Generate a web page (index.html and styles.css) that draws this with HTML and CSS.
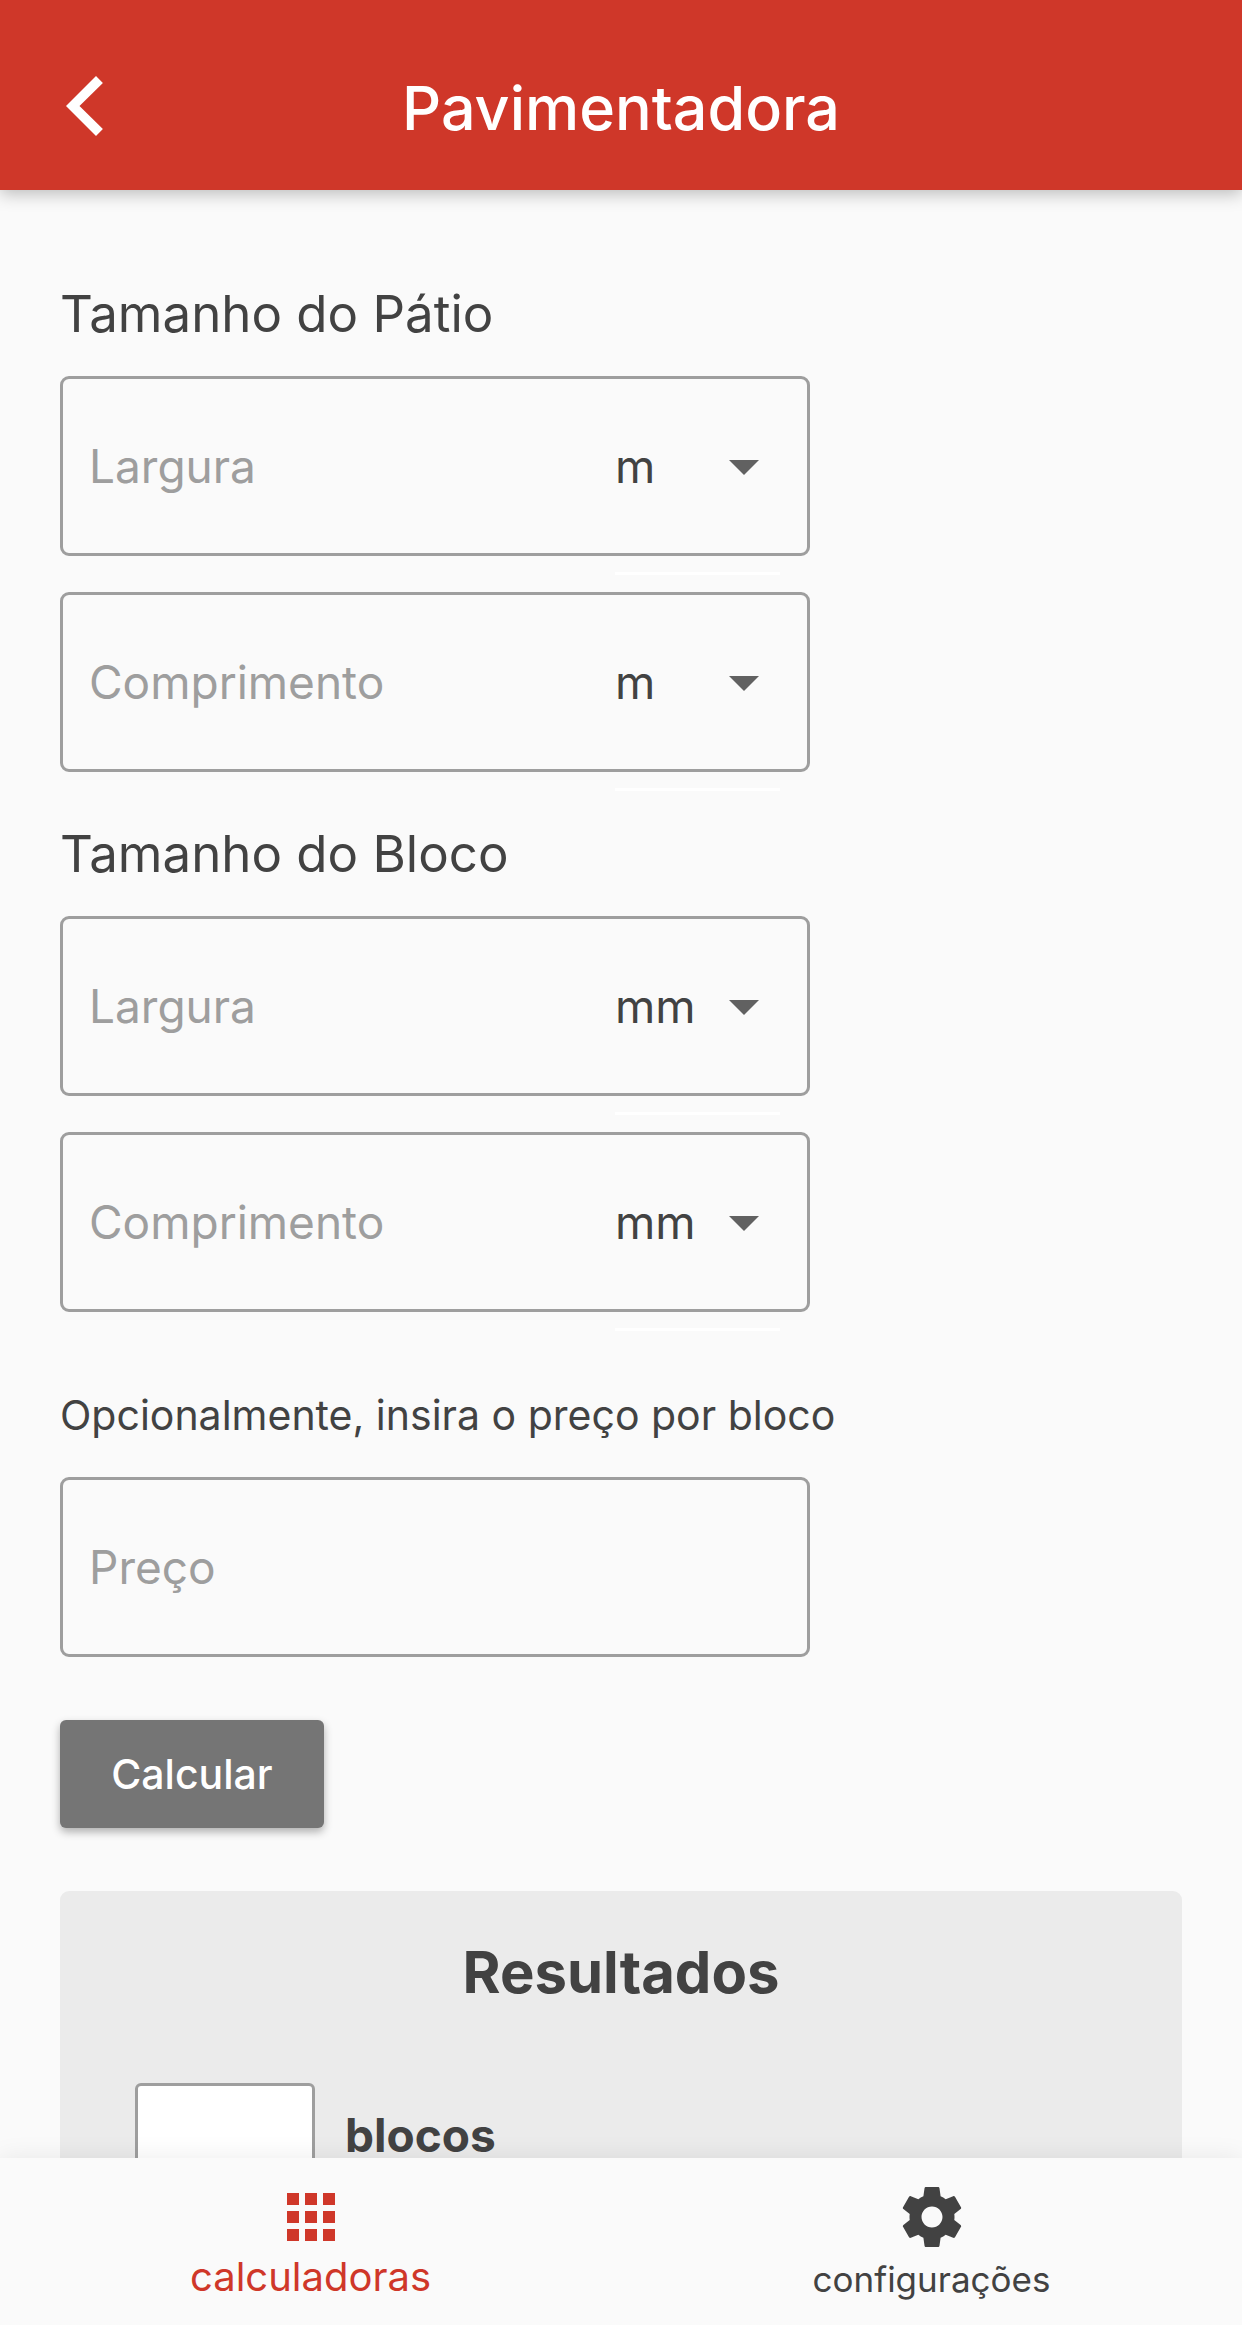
FILE: index.html
```html
<!DOCTYPE html>
<html lang="pt-BR">
<head>
    <meta charset="UTF-8">
    <meta name="viewport" content="width=device-width, initial-scale=1.0">
    <title>Pavimentadora</title>
    <link rel="stylesheet" href="styles.css">
</head>
<body>
    <header class="app-bar">
        <button class="back" type="button" aria-label="Voltar">
            <svg viewBox="0 0 13 24"><path d="M0 12L10 2l2.3 2.3L4.5 12l7.8 7.7L10 22z"/></svg>
        </button>
        <h1>Pavimentadora</h1>
    </header>

    <main>
        <form>
            <h2>Tamanho do Pátio</h2>
            <div class="fields">
                <div class="field">
                    <input type="text" inputmode="decimal" placeholder="Largura" aria-label="Largura do pátio">
                    <div class="unit">
                        <select aria-label="Unidade da largura do pátio">
                            <option>mm</option>
                            <option>cm</option>
                            <option selected>m</option>
                        </select>
                        <svg viewBox="0 0 24 24"><path d="M7 10l5 5 5-5z"/></svg>
                    </div>
                </div>
                <div class="field">
                    <input type="text" inputmode="decimal" placeholder="Comprimento" aria-label="Comprimento do pátio">
                    <div class="unit">
                        <select aria-label="Unidade do comprimento do pátio">
                            <option>mm</option>
                            <option>cm</option>
                            <option selected>m</option>
                        </select>
                        <svg viewBox="0 0 24 24"><path d="M7 10l5 5 5-5z"/></svg>
                    </div>
                </div>
            </div>

            <h2>Tamanho do Bloco</h2>
            <div class="fields">
                <div class="field">
                    <input type="text" inputmode="decimal" placeholder="Largura" aria-label="Largura do bloco">
                    <div class="unit">
                        <select aria-label="Unidade da largura do bloco">
                            <option selected>mm</option>
                            <option>cm</option>
                            <option>m</option>
                        </select>
                        <svg viewBox="0 0 24 24"><path d="M7 10l5 5 5-5z"/></svg>
                    </div>
                </div>
                <div class="field">
                    <input type="text" inputmode="decimal" placeholder="Comprimento" aria-label="Comprimento do bloco">
                    <div class="unit">
                        <select aria-label="Unidade do comprimento do bloco">
                            <option selected>mm</option>
                            <option>cm</option>
                            <option>m</option>
                        </select>
                        <svg viewBox="0 0 24 24"><path d="M7 10l5 5 5-5z"/></svg>
                    </div>
                </div>
            </div>

            <label class="note" for="preco">Opcionalmente, insira o preço por bloco</label>
            <div class="field">
                <input type="text" inputmode="decimal" id="preco" placeholder="Preço">
            </div>

            <button class="calculate" type="button">Calcular</button>
        </form>

        <section class="results">
            <h3>Resultados</h3>
            <div class="result">
                <input type="text" id="blocos" readonly>
                <label for="blocos">blocos</label>
            </div>
        </section>
    </main>

    <nav class="tabs">
        <a href="#calculadoras" class="tab active">
            <svg viewBox="0 0 24 24"><path d="M4 8h4V4H4v4zm6 12h4v-4h-4v4zm-6 0h4v-4H4v4zm0-6h4v-4H4v4zm6 0h4v-4h-4v4zm6-10v4h4V4h-4zm-6 4h4V4h-4v4zm6 6h4v-4h-4v4zm0 6h4v-4h-4v4z"/></svg>
            <span>calculadoras</span>
        </a>
        <a href="#configuracoes" class="tab">
            <svg viewBox="0 0 24 24"><path d="M19.43 12.98c.04-.32.07-.64.07-.98s-.03-.66-.07-.98l2.11-1.65c.19-.15.24-.42.12-.64l-2-3.46c-.12-.22-.39-.3-.61-.22l-2.49 1c-.52-.4-1.08-.73-1.69-.98l-.38-2.65C14.46 2.18 14.25 2 14 2h-4c-.25 0-.46.18-.49.42l-.38 2.65c-.61.25-1.17.59-1.69.98l-2.49-1c-.23-.09-.49 0-.61.22l-2 3.46c-.13.22-.07.49.12.64l2.11 1.65c-.04.32-.07.65-.07.98s.03.66.07.98l-2.11 1.65c-.19.15-.24.42-.12.64l2 3.46c.12.22.39.3.61.22l2.49-1c.52.4 1.08.73 1.69.98l.38 2.65c.03.24.24.42.49.42h4c.25 0 .46-.18.49-.42l.38-2.65c.61-.25 1.17-.59 1.69-.98l2.49 1c.23.09.49 0 .61-.22l2-3.46c.12-.22.07-.49-.12-.64l-2.11-1.65zM12 15.5c-1.93 0-3.5-1.57-3.5-3.5s1.57-3.5 3.5-3.5 3.5 1.57 3.5 3.5-1.57 3.5-3.5 3.5z"/></svg>
            <span>configurações</span>
        </a>
    </nav>
</body>
</html>
```
FILE: styles.css
```css
:root {
    --primary: #cf3729;
    --bg-color: #fafafa;
    --text-color: #424242;
    --border-color: #9e9e9e;
    --panel-bg: #ebebeb;
}

* {
    box-sizing: border-box;
}

body {
    display: flex;
    flex-direction: column;
    height: 100vh;
    margin: 0;
    font-family: Inter, "Liberation Sans", sans-serif;
    background-color: var(--bg-color);
    color: var(--text-color);
}

svg {
    display: block;
    fill: currentColor;
}

input, select, button {
    font-family: inherit;
    color: inherit;
}

.app-bar {
    display: grid;
    grid-template-columns: 1fr auto 1fr;
    align-items: center;
    padding: 22px 66px 0;
    height: 190px;
    flex-shrink: 0;
    background-color: var(--primary);
    color: white;
    box-shadow: 0 4px 16px rgba(0, 0, 0, 0.25);
    z-index: 1;
}
.app-bar h1 {
    margin: 0;
    padding-top: 4px;
    font-size: 61px;
    line-height: 80px;
    font-weight: 500;
}
.back {
    justify-self: start;
    padding: 0;
    border: none;
    background: none;
    cursor: pointer;
}
.back svg {
    width: 39px;
    height: 72px;
}

main {
    flex: 1;
    min-height: 0;
    padding: 42px 60px 60px;
    overflow-y: auto;
    scrollbar-width: none;
}
h2 {
    margin: 50px 0 30px;
    font-size: 51px;
    line-height: 64px;
    font-weight: 400;
}
h2:first-child {
    margin-top: 50px;
}
.fields {
    display: flex;
    flex-direction: column;
    gap: 36px;
}
.field {
    display: flex;
    align-items: center;
    width: 750px;
    max-width: 100%;
    height: 180px;
    padding: 0 27px 0 26px;
    border: 3px solid var(--border-color);
    border-radius: 9px;
}
.field input {
    flex: 1;
    min-width: 0;
    padding: 0;
    border: none;
    outline: none;
    background: none;
    font-size: 46px;
    line-height: 60px;
}
.field input::placeholder {
    color: var(--border-color);
    opacity: 1;
}
.unit {
    position: relative;
    width: 165px;
    height: 100%;
}
.unit select {
    appearance: none;
    width: 100%;
    height: 100%;
    padding: 0;
    border: none;
    outline: none;
    background: none;
    font-size: 46px;
    line-height: 60px;
    cursor: pointer;
}
.unit svg {
    position: absolute;
    right: 0;
    top: 50%;
    margin-top: -36px;
    width: 72px;
    height: 72px;
    color: #616161;
    pointer-events: none;
}
/* select underline, drawn under the outlined box */
.unit::after {
    content: "";
    position: absolute;
    left: 0;
    right: 0;
    bottom: -22px;
    height: 3px;
    background-color: white;
}

.note {
    display: block;
    margin: 79px 0 38px;
    font-size: 41px;
    line-height: 48px;
}
.calculate {
    display: block;
    margin: 63px 0;
    width: 264px;
    height: 108px;
    border: none;
    border-radius: 6px;
    background-color: #757575;
    color: white;
    font-size: 41px;
    font-weight: 500;
    box-shadow: 0 4px 8px rgba(0, 0, 0, 0.3);
    cursor: pointer;
}

.results {
    padding: 45px 75px 60px;
    border-radius: 9px;
    background-color: var(--panel-bg);
}
.results h3 {
    margin: 0 0 75px;
    font-size: 58px;
    line-height: 72px;
    font-weight: 700;
    text-align: center;
}
.result {
    display: flex;
    align-items: center;
    gap: 30px;
}
.result input {
    width: 180px;
    height: 104px;
    border: 3px solid var(--border-color);
    border-radius: 6px;
    background-color: white;
    font-size: 46px;
}
.result label {
    font-size: 46px;
    line-height: 60px;
    font-weight: 700;
}

.tabs {
    display: flex;
    flex-shrink: 0;
    height: 167px;
    background-color: var(--bg-color);
    box-shadow: 0 0 24px rgba(0, 0, 0, 0.08);
    z-index: 1;
}
.tab {
    flex: 1;
    display: flex;
    flex-direction: column;
    align-items: center;
    padding-top: 23px;
    font-size: 35px;
    line-height: 52px;
    color: inherit;
    text-decoration: none;
}
.tab.active {
    font-size: 40px;
    line-height: 48px;
    color: var(--primary);
}
.tab svg {
    width: 72px;
    height: 72px;
}
```
